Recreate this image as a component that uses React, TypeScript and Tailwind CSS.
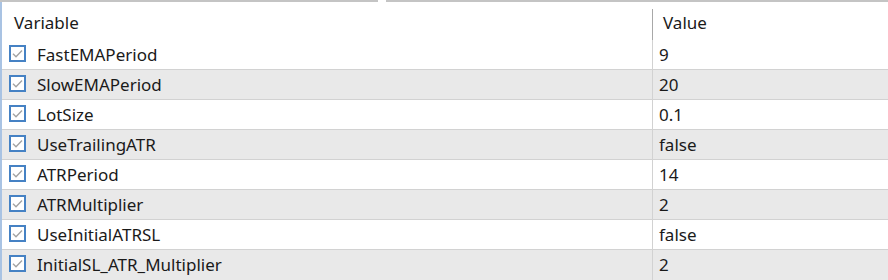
import React from "react";

const rows: [string, string][] = [
  ["FastEMAPeriod", "9"],
  ["SlowEMAPeriod", "20"],
  ["LotSize", "0.1"],
  ["UseTrailingATR", "false"],
  ["ATRPeriod", "14"],
  ["ATRMultiplier", "2"],
  ["UseInitialATRSL", "false"],
  ["InitialSL_ATR_Multiplier", "2"],
];

function Check() {
  return (
    <div className="w-[17px] h-[17px] border-2 border-solid border-[#4682c4] bg-white flex items-center justify-center mb-[3px] shrink-0">
      <svg width="13" height="13" viewBox="0 0 13 13">
        <path d="M2 6.8 L5 9.8 L11 3.6" fill="none" stroke="#a3a3a3" strokeWidth="1.4" />
      </svg>
    </div>
  );
}

export default function App() {
  return (
    <div className="w-[888px] h-[280px] bg-white overflow-hidden flex flex-col font-['Noto_Sans','Open_Sans',sans-serif] text-[17px] text-[#1a1a1a]">
      <div className="h-[2px] flex shrink-0">
        <div className="w-[378px] bg-[#c4c4c4]" />
        <div className="w-[8px]" />
        <div className="flex-1 bg-[#c4c4c4]" />
      </div>
      <div className="flex-1 flex flex-col border-l-2 border-l-[#a9c3e3] border-b-2 border-b-[#2a78cc]">
        <div className="h-[38px] flex shrink-0">
          <div className="w-[650px] pl-[12px] flex items-center pt-[4px]">Variable</div>
          <div className="flex-1 flex flex-col">
            <div className="h-[7px]" />
            <div className="flex-1 flex">
              <div className="w-[1px] bg-[#a8a8a8]" />
              <div className="pl-[10px] flex items-center pb-[3px]">Value</div>
            </div>
          </div>
        </div>
        {rows.map(([name, value], i) => (
          <div
            key={name}
            className={
              "h-[30px] flex shrink-0 " +
              (i < rows.length - 1 ? "border-b border-[#d2d2d2] " : "") +
              (i % 2 === 1 ? "bg-[#e9e9e9]" : "bg-white")
            }
          >
            <div className="w-[650px] flex items-center pl-[7px] gap-[11px]">
              <Check />
              <span>{name}</span>
            </div>
            <div className="w-[1px] bg-[#d2d2d2]" />
            <div className="flex-1 flex items-center pl-[6px]">{value}</div>
          </div>
        ))}
      </div>
    </div>
  );
}
